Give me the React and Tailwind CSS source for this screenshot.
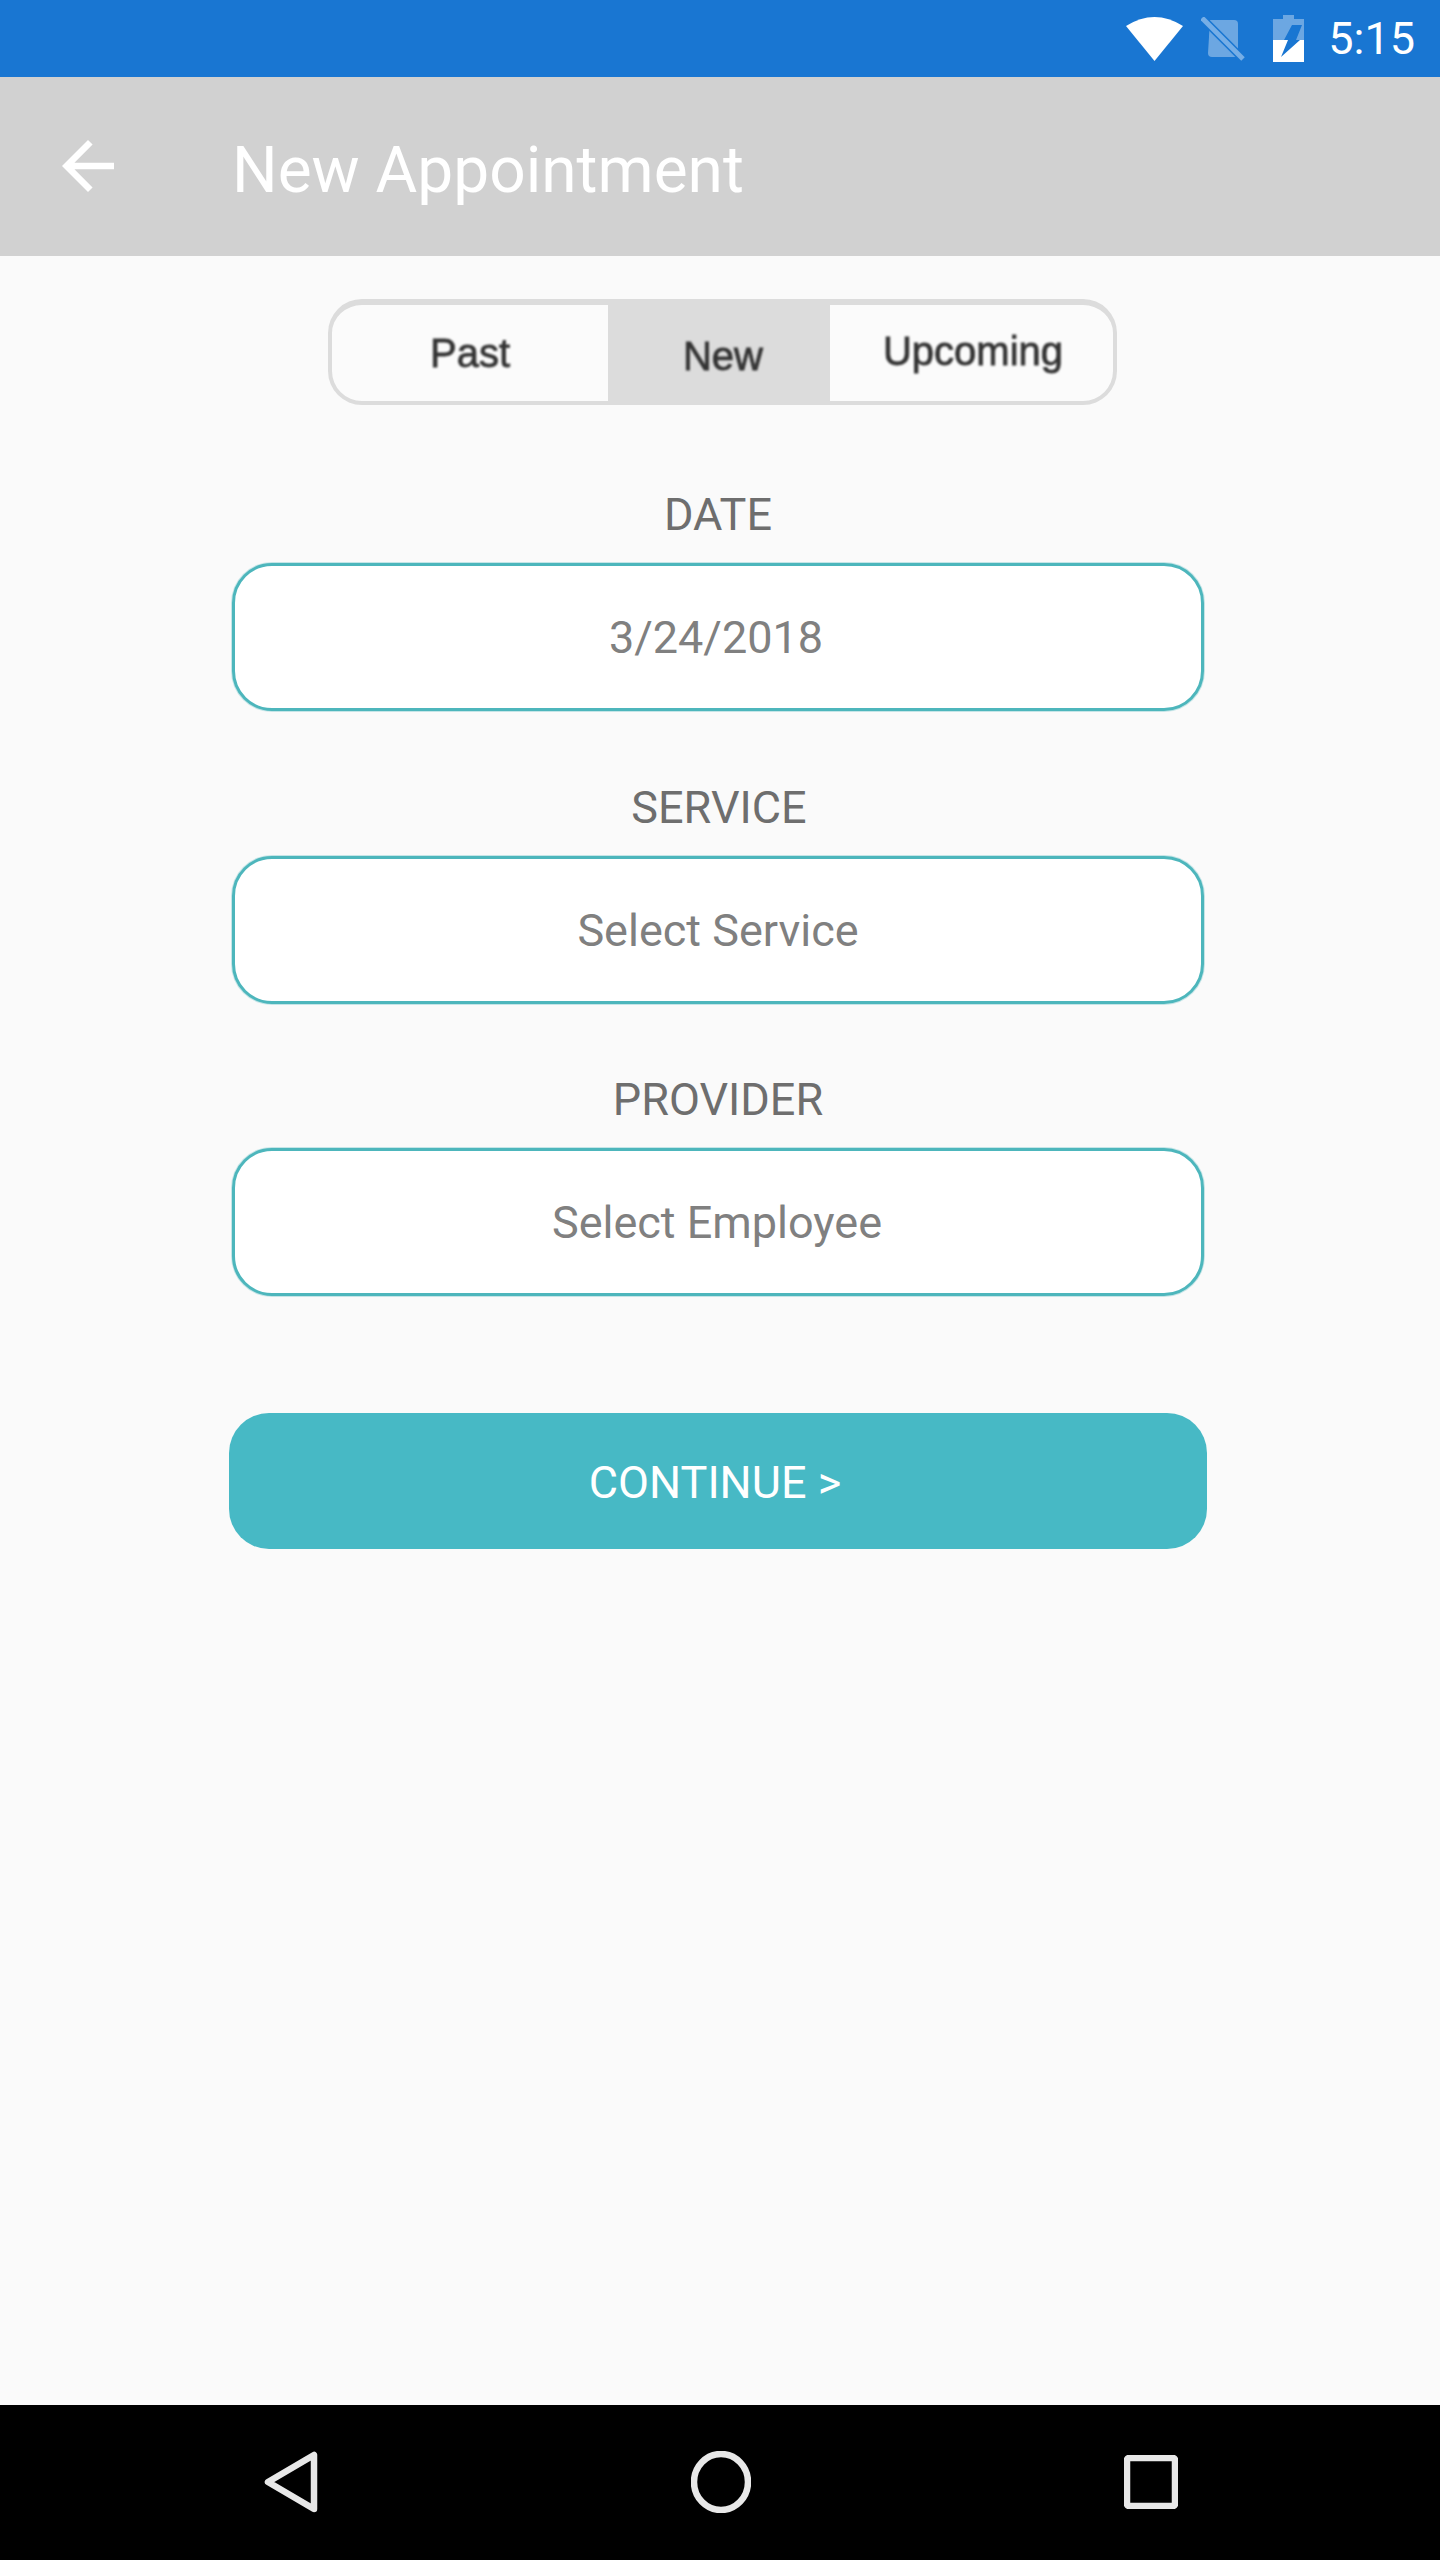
import React from 'react';

const WifiIcon = () => (
  <svg width="57" height="44" viewBox="0 0 57 44" className="shrink-0">
    <path d="M0 9 Q28.5 -9 57 9 L28.5 44 Z" fill="#fff" />
  </svg>
);

const SimOffIcon = () => (
  <svg width="44" height="44" viewBox="0 0 44 44" className="shrink-0">
    <path d="M9 3 H33 Q37 3 37 7 V36 Q37 40 33 40 H11 Q7 40 7 36 Z" fill="#fff" fillOpacity="0.36" />
    <path d="M-1 -1 L38 38" stroke="#1976d2" strokeWidth="8" />
    <path d="M1 1 L42 42" stroke="#76aee6" strokeWidth="5" />
  </svg>
);

const BatteryIcon = () => (
  <svg width="31" height="47" viewBox="0 0 31 47" className="shrink-0">
    <path d="M10 0 H21 V4 H31 V25 H0 V4 H10 Z" fill="#fff" fillOpacity="0.36" />
    <path d="M0 25 H31 V47 H0 Z" fill="#fff" />
    <path d="M19 10 H29 L23 25 H27 L8 42 L15 25 H11 Z" fill="#1976d2" />
  </svg>
);

const BackArrow = () => (
  <svg width="52" height="52" viewBox="4 4 16 16" fill="#fff" className="shrink-0 mb-[2px]">
    <path d="M20 11H7.83l5.59-5.59L12 4l-8 8 8 8 1.41-1.41L7.83 13H20v-2z" />
  </svg>
);

const fields = [
  { label: 'DATE', value: '3/24/2018', valueClass: 'pr-[4px]' },
  { label: 'SERVICE', value: 'Select Service', labelClass: 'pl-[2px]' },
  { label: 'PROVIDER', value: 'Select Employee', valueClass: 'pr-[2px]' },
];

const App = () => {
  return (
    <div className="w-[1440px] h-[2560px] flex flex-col bg-[#fafafa] font-['Roboto',sans-serif] overflow-hidden">
      {/* Status bar */}
      <div className="h-[77px] bg-[#1976d2] flex items-center justify-end pr-[25px] text-white">
        <WifiIcon />
        <div className="ml-[18px]"><SimOffIcon /></div>
        <div className="ml-[28px]"><BatteryIcon /></div>
        <span className="ml-[24px] text-[45px] leading-none">5:15</span>
      </div>

      {/* App bar */}
      <div className="h-[179px] bg-[#d1d1d1] flex items-center pl-[62px] text-white">
        <BackArrow />
        <h1 className="ml-[118px] pt-[8px] text-[64px] leading-none font-normal">New Appointment</h1>
      </div>

      {/* Content */}
      <div className="flex-1 w-[978px] ml-[229px] pt-[43px]">
        <div className="ml-[99px] w-[789px] h-[106px] flex rounded-[34px] border-[4px] border-t-[6px] border-[#dcdcdc] overflow-hidden bg-[#fbfbfb] font-['Liberation_Sans',sans-serif] text-[40px] text-[#333333]">
          <div className="w-[276px] flex items-center justify-center pb-[1px]"><span className="blur-[0.9px] [-webkit-text-stroke:0.8px_#333333]">Past</span></div>
          <div className="w-[222px] -mt-[6px] mb-[-4px] bg-[#dcdcdc] flex items-center justify-center pt-[7px] pl-[8px]"><span className="blur-[0.9px] [-webkit-text-stroke:0.8px_#333333]">New</span></div>
          <div className="flex-1 flex items-center justify-center pb-[5px] pl-[3px]"><span className="blur-[0.9px] [-webkit-text-stroke:0.8px_#333333]">Upcoming</span></div>
        </div>

        <div className="mt-[85px] px-[3px] flex flex-col gap-[71.5px]">
          {fields.map(f => (
            <div key={f.label}>
              <div className={`h-[48px] mb-[25px] pt-[2px] flex items-center justify-center text-[45px] text-[#6e6e6e] ${f.labelClass || ''}`}>{f.label}</div>
              <div className={`h-[148px] rounded-[40px] border-[3px] border-[#4db6bc] shadow-[0_0_0_1px_rgba(77,182,188,0.3)] bg-white pt-[2px] flex items-center justify-center text-[45px] text-[#808080] ${f.valueClass || ''}`}>
                {f.value}
              </div>
            </div>
          ))}
        </div>

        <button className="mt-[117px] w-full h-[136px] rounded-[40px] bg-[#47b9c5] text-white text-[45px] flex items-center justify-center pr-[6px] pt-[4px]">
          CONTINUE &gt;
        </button>
      </div>

      {/* Navigation bar */}
      <div className="h-[155px] bg-black flex items-center pl-[264px] pb-[2px]">
        <svg width="54" height="62" viewBox="0 0 54 62" fill="none" stroke="#e8e8e8" strokeWidth="6.5" strokeLinejoin="round" className="shrink-0">
          <path d="M50 4 V58 L4 31 Z" />
        </svg>
        <svg width="60" height="62" viewBox="0 0 60 62" fill="none" stroke="#e8e8e8" strokeWidth="6.5" className="shrink-0 ml-[373px]">
          <ellipse cx="30" cy="31" rx="27" ry="28" />
        </svg>
        <svg width="54" height="54" viewBox="0 0 54 54" fill="none" stroke="#e8e8e8" strokeWidth="6.5" strokeLinejoin="round" className="shrink-0 ml-[373px]">
          <rect x="3" y="3" width="48" height="48" rx="2" />
        </svg>
      </div>
    </div>
  );
};

export default App;
